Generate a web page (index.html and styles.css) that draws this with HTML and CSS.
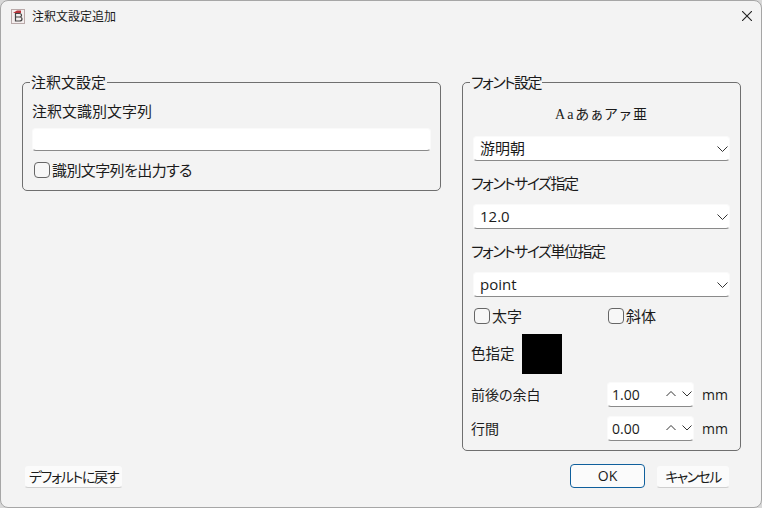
FILE: index.html
```html
<!DOCTYPE html>
<html lang="ja">
<head>
    <meta charset="UTF-8">
    <meta name="viewport" content="width=device-width, initial-scale=1.0">
    <title>注釈文設定追加</title>
    <link rel="stylesheet" href="styles.css">
</head>
<body>
    <div class="window">
        <div class="titlebar">
            <svg class="app-icon" width="16" height="16" viewBox="0 0 16 16">
                <rect x="1.5" y="1.5" width="13" height="14" fill="#f4eeee" stroke="#b9a9a9"/>
                <path d="M3 5 L7 2.5 H11 V5 Z" fill="#b5333a"/>
                <path d="M5.5 5.5 H9.5 Q11.5 5.5 11.5 7.5 Q11.5 9 9.5 9 Q12 9 12 11 Q12 13 9.5 13 H5.5 Z M5.5 9 H9.5" fill="none" stroke="#444" stroke-width="1.2"/>
            </svg>
            <span class="title">注釈文設定追加</span>
            <svg class="close" width="10" height="10" viewBox="0 0 10 10">
                <path d="M0 0 L10 10 M10 0 L0 10" stroke="#222" stroke-width="1.1"/>
            </svg>
        </div>

        <div class="content">
            <fieldset class="group group-note">
                <legend>注釈文設定</legend>
                <div class="label note-label">注釈文識別文字列</div>
                <div class="field note-input"></div>
                <label class="check note-check"><span class="box"></span>識別文字列を出力する</label>
            </fieldset>

            <fieldset class="group group-font">
                <legend class="kana">フォント設定</legend>
                <div class="preview">Aaあぁアァ亜</div>
                <div class="field select">游明朝
                    <svg class="chevron" width="11" height="6" viewBox="0 0 11 6"><path d="M.5 .5 L5.5 5.5 L10.5 .5" fill="none" stroke="#333"/></svg>
                </div>
                <div class="label row-label kana">フォントサイズ指定</div>
                <div class="field select">12.0
                    <svg class="chevron" width="11" height="6" viewBox="0 0 11 6"><path d="M.5 .5 L5.5 5.5 L10.5 .5" fill="none" stroke="#333"/></svg>
                </div>
                <div class="label row-label kana">フォントサイズ単位指定</div>
                <div class="field select">point
                    <svg class="chevron" width="11" height="6" viewBox="0 0 11 6"><path d="M.5 .5 L5.5 5.5 L10.5 .5" fill="none" stroke="#333"/></svg>
                </div>
                <div class="style-row">
                    <label class="check"><span class="box"></span>太字</label>
                    <label class="check"><span class="box"></span>斜体</label>
                </div>
                <div class="color-row">
                    <span class="label">色指定</span>
                    <span class="swatch"></span>
                </div>
                <div class="spin-row">
                    <span class="label">前後の余白</span>
                    <div class="field spin">1.00
                        <span class="arrows">
                            <svg width="10" height="6" viewBox="0 0 10 6"><path d="M.5 5 L5 .5 L9.5 5" fill="none" stroke="#333"/></svg>
                            <svg width="10" height="6" viewBox="0 0 10 6"><path d="M.5 .5 L5 5 L9.5 .5" fill="none" stroke="#333"/></svg>
                        </span>
                    </div>
                    <span class="unit">mm</span>
                </div>
                <div class="spin-row">
                    <span class="label">行間</span>
                    <div class="field spin">0.00
                        <span class="arrows">
                            <svg width="10" height="6" viewBox="0 0 10 6"><path d="M.5 5 L5 .5 L9.5 5" fill="none" stroke="#333"/></svg>
                            <svg width="10" height="6" viewBox="0 0 10 6"><path d="M.5 .5 L5 5 L9.5 .5" fill="none" stroke="#333"/></svg>
                        </span>
                    </div>
                    <span class="unit">mm</span>
                </div>
            </fieldset>
        </div>

        <div class="footer">
            <button class="btn btn-default">デフォルトに戻す</button>
            <button class="btn btn-ok">OK</button>
            <button class="btn btn-cancel">キャンセル</button>
        </div>
    </div>
</body>
</html>
```
FILE: styles.css
```css
* {
    box-sizing: border-box;
}
html, body {
    margin: 0;
    padding: 0;
    background-color: #d8d8d8;
}
body {
    width: 762px;
    height: 508px;
    overflow: hidden;
    font-family: "Open Sans", "Noto Sans CJK JP", sans-serif;
    font-feature-settings: "palt";
    font-size: 14px;
    color: #1b1b1b;
}
.window {
    width: 762px;
    height: 508px;
    background-color: #f3f3f3;
    border: 1px solid #a6a6a6;
    border-radius: 8px;
    display: flex;
    flex-direction: column;
}
.titlebar {
    height: 29px;
    display: flex;
    align-items: center;
    padding-left: 9px;
    padding-right: 9px;
    flex: none;
}
.app-icon {
    flex: none;
}
.title {
    margin-left: 6px;
    font-size: 12px;
    flex: 1;
}
.close {
    flex: none;
}
.content {
    flex: none;
    height: 431px;
    padding-top: 42px;
    padding-left: 21px;
    display: flex;
    align-items: flex-start;
    gap: 21px;
}
.group {
    margin: 0;
    border: 1px solid #6f6f6f;
    border-radius: 5px;
    padding: 0;
    min-width: 0;
}
.group legend {
    padding: 0 1px;
    margin-left: -2px;
    font-size: 15px;
    line-height: 20px;
}
.group-font legend {
    margin-left: -1px;
}
.group-note {
    width: 419px;
    height: 119px;
    padding: 0 9px;
}
.group-font {
    width: 279px;
    height: 379px;
    padding: 0 10px 0 8px;
}
.label {
    font-size: 15px;
    line-height: 20px;
}
.kana {
    letter-spacing: -1.5px;
}
.field {
    background-color: #fff;
    border-radius: 4px;
    border: 1px solid #fafafa;
    border-bottom: 1px solid #8a8a8a;
    font-size: 15px;
}
.note-label {
    margin-top: 9px;
}
.note-input {
    height: 23px;
    margin-top: 7px;
}
.check {
    display: flex;
    align-items: center;
    gap: 2px;
    line-height: 16px;
    font-size: 15px;
}
.box {
    width: 16px;
    height: 16px;
    border: 1px solid #666;
    border-radius: 4px;
    background-color: #f7f7f7;
    flex: none;
}
.note-check {
    margin-top: 11px;
    margin-left: 2px;
    letter-spacing: -0.6px;
}
.preview {
    margin-top: 10px;
    height: 24px;
    padding-left: 3px;
    line-height: 26px;
    text-align: center;
    font-family: "Liberation Serif", "Noto Sans CJK JP", serif;
    font-size: 14px;
    letter-spacing: 2px;
}
.select {
    position: relative;
    height: 25px;
    margin-top: 10px;
    margin-left: 2px;
    padding-left: 6px;
    line-height: 23px;
}
.row-label + .select {
    margin-top: 11px;
}
.chevron {
    position: absolute;
    right: 1px;
    top: 9px;
}
.row-label {
    margin-top: 12px;
}
.style-row {
    display: grid;
    grid-template-columns: 134px 1fr;
    margin-top: 11px;
    padding-left: 3px;
}
.color-row {
    display: flex;
    align-items: center;
    gap: 7px;
    margin-top: 10px;
}
.color-row .label {
    font-size: 14.5px;
}
.swatch {
    width: 40px;
    height: 40px;
    background-color: #000;
}
.spin-row {
    display: flex;
    align-items: center;
    height: 25px;
    margin-top: 8px;
}
.spin-row + .spin-row {
    margin-top: 9px;
}
.spin-row .label {
    width: 136px;
    font-size: 14px;
}
.spin {
    position: relative;
    width: 87px;
    height: 25px;
    padding-left: 4px;
    line-height: 23px;
    font-size: 14px;
}
.arrows {
    position: absolute;
    right: 1px;
    top: 8px;
    display: flex;
    gap: 6px;
}
.arrows svg {
    display: block;
}
.unit {
    margin-left: 8px;
}
.footer {
    flex: 1;
    display: flex;
    align-items: flex-start;
    padding: 4px 31px 0 23px;
}
.btn {
    font: inherit;
    font-size: 14px;
    color: #1b1b1b;
    background-color: #fbfbfb;
    border: 1px solid #f3f3f3;
    border-bottom-color: #cfcfcf;
    border-radius: 4px;
    height: 23px;
    padding: 0;
    line-height: 20px;
    white-space: nowrap;
}
.btn-default {
    width: 99px;
    letter-spacing: -1.3px;
}
.btn-ok {
    width: 75px;
    height: 24px;
    margin-left: auto;
    margin-top: -1px;
    border: 1px solid #0f5f9c;
    border-radius: 4px;
}
.btn-cancel {
    width: 74px;
    margin-left: 11px;
    letter-spacing: -1.6px;
}
```
